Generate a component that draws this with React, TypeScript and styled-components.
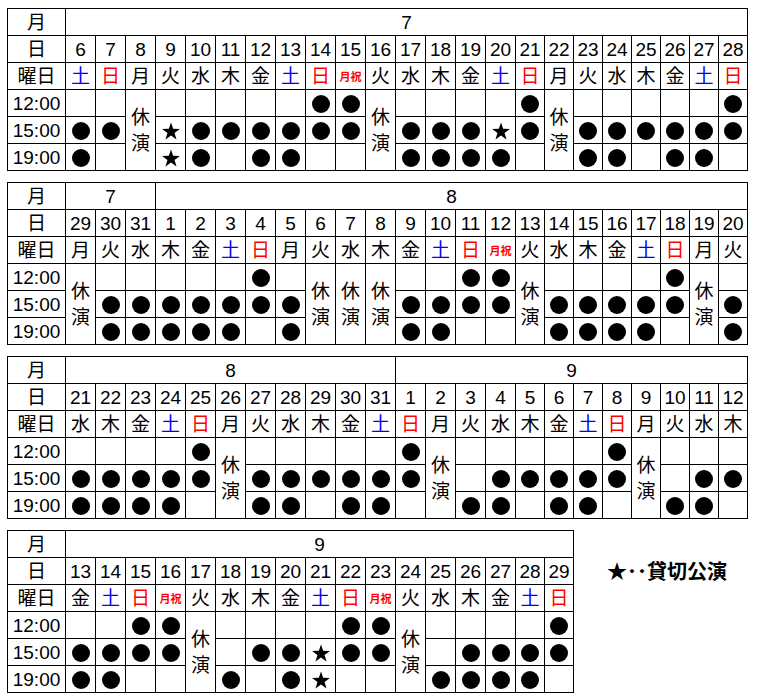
import styled, { createGlobalStyle } from 'styled-components';

const GlobalStyle = createGlobalStyle`
  body {
    margin: 0;
    background: #fff;
    color: #000;
    font-family: 'Liberation Sans', 'Noto Sans CJK JP', sans-serif;
  }
`;

type Tone = 'sat' | 'sun' | 'holiday' | undefined;

interface Day {
  date: string;
  week: string;
  tone: Tone;
  rest: boolean;
  slots: string;
}

interface Schedule {
  width: number;
  months: { label: string; span: number }[];
  days: Day[];
}

// "6土.oo" -> date 6, 土, slots 12:00/15:00/19:00 ('.' none, 'o' 公演, '*' 貸切), 'x' = 休演
const parseDays = (src: string): Day[] =>
  src.split(' ').map((item) => {
    const [, date, w, rest] = item.match(/^(\d+)(.)(.*)$/)!;
    const week = w === '祝' ? '月祝' : w;
    const tone: Tone = w === '土' ? 'sat' : w === '日' ? 'sun' : w === '祝' ? 'holiday' : undefined;
    return { date, week, tone, rest: rest === 'x', slots: rest };
  });

const schedules: Schedule[] = [
  {
    width: 741,
    months: [{ label: '7', span: 23 }],
    days: parseDays(
      '6土.oo 7日.o. 8月x 9火.** 10水.oo 11木.o. 12金.oo 13土.oo 14日oo. 15祝oo. 16火x 17水.oo 18木.oo 19金.oo 20土.*o 21日oo. 22月x 23火.oo 24水.oo 25木.o. 26金.oo 27土.oo 28日oo.'
    ),
  },
  {
    width: 741,
    months: [
      { label: '7', span: 3 },
      { label: '8', span: 20 },
    ],
    days: parseDays(
      '29月x 30火.oo 31水.oo 1木.oo 2金.oo 3土.oo 4日oo. 5月.oo 6火x 7水x 8木x 9金.oo 10土.oo 11日oo. 12祝oo. 13火x 14水.oo 15木.oo 16金.oo 17土.oo 18日oo. 19月x 20火.oo'
    ),
  },
  {
    width: 741,
    months: [
      { label: '8', span: 11 },
      { label: '9', span: 12 },
    ],
    days: parseDays(
      '21水.oo 22木.oo 23金.oo 24土.oo 25日oo. 26月x 27火.oo 28水.oo 29木.o. 30金.oo 31土.oo 1日oo. 2月x 3火..o 4水.oo 5木.o. 6金.oo 7土.oo 8日oo. 9月x 10火..o 11水.oo 12木.o.'
    ),
  },
  {
    width: 567,
    months: [{ label: '9', span: 17 }],
    days: parseDays(
      '13金.oo 14土.oo 15日oo. 16祝oo. 17火x 18水..o 19木.o. 20金.oo 21土.** 22日oo. 23祝oo. 24火x 25水..o 26木.oo 27金.oo 28土.oo 29日oo.'
    ),
  },
];

const times = ['12:00', '15:00', '19:00'];

// columns like a browser table: the remainder goes to the first columns
const columnsFor = (width: number, count: number) => {
  const inner = width - 1 - 58;
  const base = Math.floor(inner / count);
  const extra = inner - base * count;
  const narrow = count - extra;
  return `58px${extra ? ` repeat(${extra}, ${base + 1}px)` : ''}${narrow ? ` repeat(${narrow}, ${base}px)` : ''}`;
};

const Page = styled.div`
  padding: 8px 0 0 7px;
  display: flex;
  flex-direction: column;
  gap: 11px;
`;

const Grid = styled.div<{ $width: number; $columns: string }>`
  box-sizing: border-box;
  width: ${({ $width }) => $width}px;
  display: grid;
  grid-template-columns: ${({ $columns }) => $columns};
  grid-auto-rows: 27px;
  border-top: 1px solid #000;
  border-left: 1px solid #000;
`;

const Cell = styled.div<{ $span?: number; $rows?: number }>`
  box-sizing: border-box;
  grid-column: span ${({ $span }) => $span ?? 1};
  grid-row: span ${({ $rows }) => $rows ?? 1};
  border-right: 1px solid #000;
  border-bottom: 1px solid #000;
  display: flex;
  align-items: center;
  justify-content: center;
  font-size: 19px;
  line-height: 26px;
  padding-top: 1px;
  white-space: nowrap;
  overflow: hidden;
`;

const Week = styled.span<{ $tone: Tone }>`
  color: ${({ $tone }) => ($tone === 'sat' ? '#0000ff' : $tone === 'sun' || $tone === 'holiday' ? '#ff0000' : '#000')};
  font-size: ${({ $tone }) => ($tone === 'holiday' ? '11px' : '19px')};
  font-weight: ${({ $tone }) => ($tone === 'holiday' ? 700 : 400)};
`;

const Rest = styled.span`
  display: flex;
  flex-direction: column;
  align-items: center;
  line-height: 26px;
`;

const Dot = styled.span`
  width: 18px;
  height: 18px;
  border-radius: 50%;
  background: #000;
`;

const StarMark = styled.svg`
  width: 18px;
  height: 18px;
  display: block;
`;

const Bottom = styled.div`
  display: flex;
  align-items: flex-start;
`;

const Legend = styled.div`
  margin: 27px 0 0 33px;
  font-family: 'Noto Sans CJK JP', sans-serif;
  font-size: 20px;
  font-weight: 700;
  line-height: 27px;
  white-space: nowrap;
`;

const Star = () => (
  <StarMark viewBox="0 0 18 18">
    <polygon
      points="9,0.4 11.17,6.81 17.94,6.9 12.52,10.94 14.53,17.4 9,13.5 3.47,17.4 5.48,10.94 0.06,6.9 6.83,6.81"
      fill="#000"
    />
  </StarMark>
);

const Slot = ({ mark }: { mark: string }) => (
  <Cell>{mark === 'o' ? <Dot /> : mark === '*' ? <Star /> : null}</Cell>
);

const Table = ({ schedule }: { schedule: Schedule }) => {
  const { width, months, days } = schedule;
  return (
    <Grid $width={width} $columns={columnsFor(width, days.length)}>
      <Cell>月</Cell>
      {months.map((m) => (
        <Cell key={m.label} $span={m.span}>
          {m.label}
        </Cell>
      ))}
      <Cell>日</Cell>
      {days.map((d) => (
        <Cell key={d.date}>{d.date}</Cell>
      ))}
      <Cell>曜日</Cell>
      {days.map((d) => (
        <Cell key={d.date}>
          <Week $tone={d.tone}>{d.week}</Week>
        </Cell>
      ))}
      {times.map((time, i) => [
        <Cell key={time}>{time}</Cell>,
        ...days.map((d) =>
          d.rest ? (
            i === 0 ? (
              <Cell key={d.date} $rows={3}>
                <Rest>
                  <span>休</span>
                  <span>演</span>
                </Rest>
              </Cell>
            ) : null
          ) : (
            <Slot key={d.date} mark={d.slots[i]} />
          )
        ),
      ])}
    </Grid>
  );
};

const App = () => {
  const last = schedules[schedules.length - 1];
  return (
    <>
      <GlobalStyle />
      <Page>
        {schedules.slice(0, -1).map((s, i) => (
          <Table key={i} schedule={s} />
        ))}
        <Bottom>
          <Table schedule={last} />
          <Legend>★･･貸切公演</Legend>
        </Bottom>
      </Page>
    </>
  );
};

export default App;
